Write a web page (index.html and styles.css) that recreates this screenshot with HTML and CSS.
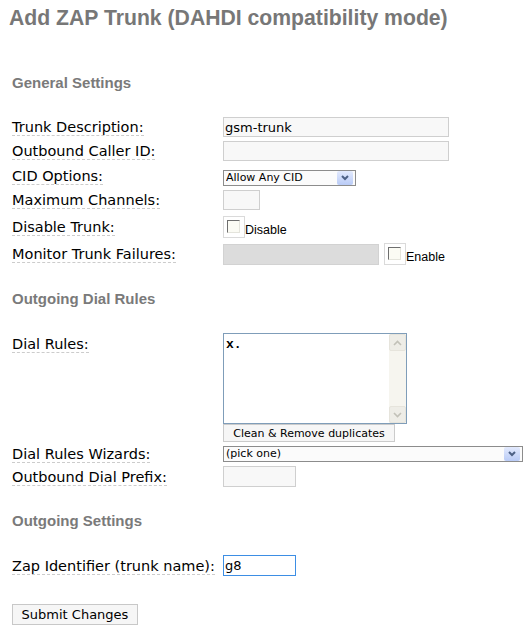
FILE: index.html
```html
<!DOCTYPE html>
<html lang="en">
<head>
<meta charset="UTF-8">
<meta name="viewport" content="width=device-width, initial-scale=1.0">
<title>Add ZAP Trunk</title>
<link rel="stylesheet" href="styles.css">
</head>
<body>

<h2>Add ZAP Trunk (DAHDI compatibility mode)</h2>

<form name="trunkEdit" onsubmit="return false">
    <h5>General Settings</h5>
    <table class="settings">
        <tr>
            <td class="label"><a class="info">Trunk Description:</a></td>
            <td><input type="text" class="field desc" value="gsm-trunk"></td>
        </tr>
        <tr>
            <td class="label"><a class="info">Outbound Caller ID:</a></td>
            <td><input type="text" class="field desc" value=""></td>
        </tr>
        <tr>
            <td class="label"><a class="info">CID Options:</a></td>
            <td>
                <span class="select cid">
                    <select><option>Allow Any CID</option></select>
                    <span class="arrow"><svg width="14" height="12" viewBox="0 0 14 12"><polyline points="4,4 7,7 10,4" fill="none" stroke="#4d6185" stroke-width="2"/></svg></span>
                </span>
            </td>
        </tr>
        <tr>
            <td class="label"><a class="info">Maximum Channels:</a></td>
            <td><input type="text" class="field tiny" value=""></td>
        </tr>
        <tr>
            <td class="label"><a class="info">Disable Trunk:</a></td>
            <td>
                <label class="check first">
                    <span class="box"><input type="checkbox"></span>
                    <span class="check-text">Disable</span>
                </label>
            </td>
        </tr>
        <tr>
            <td class="label"><a class="info">Monitor Trunk Failures:</a></td>
            <td>
                <div class="monitor">
                    <input type="text" class="field disabled" disabled>
                    <label class="check">
                        <span class="box"><input type="checkbox"></span>
                        <span class="check-text">Enable</span>
                    </label>
                </div>
            </td>
        </tr>
    </table>

    <h5>Outgoing Dial Rules</h5>
    <table class="settings">
        <tr>
            <td class="label top"><a class="info">Dial Rules:</a></td>
            <td>
                <div class="textbox">
                    <textarea>x.</textarea>
                    <div class="scrollbar">
                        <span class="scroll-btn"><svg width="9" height="6" viewBox="0 0 9 6"><polyline points="1,5 4.5,1.5 8,5" fill="none" stroke="#c2c1b8" stroke-width="1.6"/></svg></span>
                        <span class="scroll-btn"><svg width="9" height="6" viewBox="0 0 9 6"><polyline points="1,1 4.5,4.5 8,1" fill="none" stroke="#c2c1b8" stroke-width="1.6"/></svg></span>
                    </div>
                </div>
                <input type="button" class="small-btn" value="Clean &amp; Remove duplicates">
            </td>
        </tr>
        <tr>
            <td class="label"><a class="info">Dial Rules Wizards:</a></td>
            <td>
                <span class="select wizard">
                    <select><option>(pick one)</option></select>
                    <span class="arrow"><svg width="14" height="12" viewBox="0 0 14 12"><polyline points="4,4 7,7 10,4" fill="none" stroke="#4d6185" stroke-width="2"/></svg></span>
                </span>
            </td>
        </tr>
        <tr>
            <td class="label"><a class="info">Outbound Dial Prefix:</a></td>
            <td><input type="text" class="field short" value=""></td>
        </tr>
    </table>

    <h5>Outgoing Settings</h5>
    <table class="settings last">
        <tr>
            <td class="label"><a class="info">Zap Identifier (trunk name):</a></td>
            <td><input type="text" class="field short focused" value="g8"></td>
        </tr>
    </table>

    <input type="submit" class="submit" value="Submit Changes">
</form>

</body>
</html>
```

FILE: styles.css
```css
body {
    margin: 0;
    padding: 6px 0 0;
    font-family: "DejaVu Sans", Verdana, sans-serif;
    font-size: 14.5px;
    color: #000;
    background-color: #fff;
}

h2 {
    margin: 0 0 44px 9px;
    font-family: "Liberation Sans", Arial, sans-serif;
    font-size: 21.2px;
    line-height: 24px;
    font-weight: bold;
    color: #777;
}

h5 {
    margin: 0 0 23px 12px;
    font-family: "Liberation Sans", Arial, sans-serif;
    font-size: 15px;
    line-height: 18px;
    font-weight: bold;
    color: #7a7a7a;
}

form {
    margin: 0;
}

table.settings {
    border-collapse: collapse;
    margin: 0 0 23px 10px;
}

table.settings.last {
    margin-bottom: 26px;
}

table.settings td {
    padding: 2px;
    vertical-align: middle;
}

td.label {
    width: 207px;
    white-space: nowrap;
}

td.label.top {
    vertical-align: top;
    padding-top: 5px;
}

a.info {
    color: #000;
    text-decoration: none;
    border-bottom: 1px dashed #cccccc;
}

/* text inputs */
.field {
    display: block;
    box-sizing: border-box;
    height: 20px;
    margin: 0;
    padding: 0 1px;
    border: 1px solid #cfcfcf;
    background-color: #f8f8f8;
    font-family: "DejaVu Sans", Verdana, sans-serif;
    font-size: 13px;
    color: #000;
    outline: none;
}

.field.desc {
    width: 226px;
}

.field.tiny {
    width: 37px;
}

.field.short {
    width: 73px;
    height: 21px;
}

.field.disabled {
    width: 156px;
    height: 21px;
    background-color: #dcdcdc;
    border-color: #d2d2d2;
}

.field.focused {
    border-color: #3d8ee4;
    background-color: #fff;
}

/* selects */
.select {
    display: flex;
    box-sizing: border-box;
    height: 16px;
    border: 1px solid #8c8c8c;
    background-color: #fbfbfb;
}

.select select {
    flex: 1;
    min-width: 0;
    height: 14px;
    margin: 0;
    padding: 0 0 0 2px;
    border: 0;
    background: transparent;
    appearance: none;
    -webkit-appearance: none;
    font-family: "DejaVu Sans", Verdana, sans-serif;
    font-size: 11px;
    line-height: 14px;
    color: #000;
    outline: none;
}

.select .arrow {
    display: flex;
    align-items: center;
    justify-content: center;
    width: 16px;
    margin: 0 2px 0 0;
    border-radius: 2px;
    background: linear-gradient(#e3eafd, #b9cbf6);
}

.select.cid {
    width: 133px;
    margin-top: 5px;
}

.select.wizard {
    width: 300px;
}

/* checkboxes */
.check {
    display: flex;
    align-items: center;
}

.check.first {
    margin: 2px 0 1px;
}

.check .box {
    display: block;
    padding: 3px 4px 4px 3px;
    border: 1px solid #dadada;
}

.check input {
    display: block;
    width: 13px;
    height: 13px;
    margin: 0;
    appearance: none;
    -webkit-appearance: none;
    border: 1px solid;
    border-color: #6e6e6e #e4e4dc #e4e4dc #6e6e6e;
    background-color: #fbfbf4;
}

.check-text {
    padding-top: 5px;
    font-family: "Liberation Sans", Arial, sans-serif;
    font-size: 12.5px;
}

.monitor {
    display: flex;
    align-items: center;
    gap: 5px;
}

/* dial rules text box */
.textbox {
    display: flex;
    box-sizing: border-box;
    width: 184px;
    height: 91px;
    border: 1px solid #7f9db9;
    background-color: #fff;
}

.textbox textarea {
    flex: 1;
    min-width: 0;
    margin: 0;
    padding: 3px 2px 0;
    border: 0;
    resize: none;
    overflow: hidden;
    font-family: "Liberation Mono", "Courier New", monospace;
    font-size: 13px;
    font-weight: bold;
    color: #000;
    outline: none;
}

.scrollbar {
    display: flex;
    flex-direction: column;
    justify-content: space-between;
    width: 17px;
    background-color: #f6f5ef;
}

.scroll-btn {
    display: flex;
    align-items: center;
    justify-content: center;
    box-sizing: border-box;
    height: 17px;
    border: 1px solid #e6e4dc;
    border-radius: 2px;
    background-color: #eeede7;
}

/* buttons */
.small-btn {
    display: block;
    box-sizing: border-box;
    width: 172px;
    height: 18px;
    margin: 0;
    padding: 0;
    border: 1px solid #cbcbcb;
    background-color: #f6f6f6;
    font-family: "DejaVu Sans", Verdana, sans-serif;
    font-size: 11px;
    color: #000;
}

.submit {
    display: block;
    box-sizing: border-box;
    width: 126px;
    height: 21px;
    margin: 0 0 0 12px;
    padding: 0;
    border: 1px solid #c8c8c8;
    background-color: #f6f6f6;
    font-family: "DejaVu Sans", Verdana, sans-serif;
    font-size: 13px;
    color: #000;
}
```
